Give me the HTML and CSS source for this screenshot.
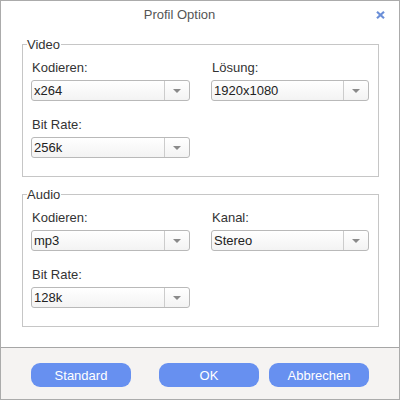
FILE: index.html
```html
<!DOCTYPE html>
<html>
<head>
<meta charset="utf-8">
<link rel="stylesheet" href="styles.css">
</head>
<body>
<div class="dialog">
  <div class="header">
    <div class="title">Profil Option</div>
    <div class="close">
      <svg width="9" height="8" viewBox="0 0 9 8"><path d="M1 0.8 L8 7.2 M8 0.8 L1 7.2" stroke="#6b8fd8" stroke-width="2.2" fill="none"/></svg>
    </div>
  </div>
  <div class="content">
    <div class="group">
      <span class="legend">Video</span>
      <div class="grid">
        <div class="field">
          <div class="label">Kodieren:</div>
          <div class="select"><span class="value">x264</span><span class="arrow"><i class="tri"></i></span></div>
        </div>
        <div class="field">
          <div class="label">Lösung:</div>
          <div class="select"><span class="value">1920x1080</span><span class="arrow"><i class="tri"></i></span></div>
        </div>
        <div class="field">
          <div class="label">Bit Rate:</div>
          <div class="select"><span class="value">256k</span><span class="arrow"><i class="tri"></i></span></div>
        </div>
      </div>
    </div>
    <div class="group">
      <span class="legend">Audio</span>
      <div class="grid">
        <div class="field">
          <div class="label">Kodieren:</div>
          <div class="select"><span class="value">mp3</span><span class="arrow"><i class="tri"></i></span></div>
        </div>
        <div class="field">
          <div class="label">Kanal:</div>
          <div class="select"><span class="value">Stereo</span><span class="arrow"><i class="tri"></i></span></div>
        </div>
        <div class="field">
          <div class="label">Bit Rate:</div>
          <div class="select"><span class="value">128k</span><span class="arrow"><i class="tri"></i></span></div>
        </div>
      </div>
    </div>
  </div>
  <div class="footer">
    <button class="btn btn-first">Standard</button>
    <button class="btn btn-ok">OK</button>
    <button class="btn">Abbrechen</button>
  </div>
</div>
</body>
</html>
```
FILE: styles.css
```css
html, body {
  margin: 0;
  padding: 0;
  background: #ffffff;
}
body {
  font-family: "Liberation Sans", Arial, sans-serif;
  font-size: 13px;
  color: #333333;
}
.dialog {
  width: 400px;
  height: 400px;
  box-sizing: border-box;
  border: 1px solid #ababab;
  display: flex;
  flex-direction: column;
  background: #ffffff;
}
.header {
  height: 28px;
  display: flex;
  align-items: center;
  padding-right: 14px;
}
.title {
  flex: 1;
  text-align: center;
  padding-right: 18px;
  color: #555555;
  font-size: 13px;
  line-height: 28px;
}
.close {
  width: 9px;
  height: 8px;
  display: flex;
  margin-top: -1px;
}
.content {
  flex: 1;
  padding: 15px 20px 0 21px;
  display: flex;
  flex-direction: column;
  gap: 17px;
}
.group {
  position: relative;
  border: 1px solid #c6c6c6;
  height: 133px;
  box-sizing: border-box;
  padding: 15px 9px 0 8px;
}
.legend {
  position: absolute;
  top: -8px;
  left: 4px;
  background: #ffffff;
  line-height: 15px;
  padding-right: 1px;
  color: #333333;
}
.grid {
  display: grid;
  grid-template-columns: 159px 158px;
  column-gap: 21px;
  row-gap: 16px;
}
.field {
  display: flex;
  flex-direction: column;
  gap: 5px;
}
.label {
  line-height: 15px;
  padding-left: 1px;
}
.select {
  height: 21px;
  box-sizing: border-box;
  border: 1px solid #b9b9b9;
  border-radius: 3px;
  background: linear-gradient(#ffffff, #f3f3f3);
  display: flex;
  align-items: stretch;
}
.value {
  flex: 1;
  padding-left: 2px;
  line-height: 19px;
  color: #222222;
}
.arrow {
  width: 24px;
  border-left: 1px solid #cccccc;
  display: flex;
  align-items: center;
  justify-content: center;
}
.tri {
  display: block;
  width: 0;
  height: 0;
  border-left: 4px solid transparent;
  border-right: 4px solid transparent;
  border-top: 4px solid #8a8a8a;
  margin-top: 1px;
}
.footer {
  height: 52px;
  box-sizing: border-box;
  border-top: 1px solid #a6a6a6;
  background: #f5f3f2;
  display: flex;
  align-items: flex-start;
  padding: 15px 0 0 30px;
}
.btn {
  width: 100px;
  height: 24px;
  border: none;
  border-radius: 9px;
  background: #6790f0;
  color: #ffffff;
  font-family: "Liberation Sans", Arial, sans-serif;
  font-size: 13px;
  padding: 0;
  margin: 0;
}
.btn-first {
  margin-right: 28px;
}
.btn-ok {
  margin-right: 10px;
}
```
